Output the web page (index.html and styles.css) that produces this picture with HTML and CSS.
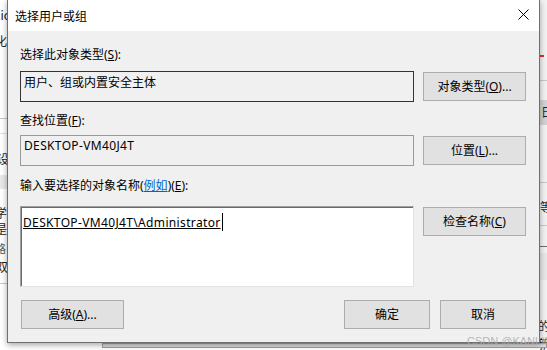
FILE: index.html
```html
<!DOCTYPE html>
<html lang="zh-CN">
<head>
	<meta charset="UTF-8">
	<meta name="viewport" content="width=device-width, initial-scale=1.0">
	<title>选择用户或组</title>
	<link rel="stylesheet" href="styles.css">
</head>
<body>
	<div class="desk">
		<!-- window behind the dialog, only its edges show -->
		<div class="bg bg--left">
			<span class="frag" style="top:7px;left:-3px">lic</span>
			<span class="frag" style="top:33px;left:-5px">化</span>
			<span class="line" style="top:118px"></span>
			<span class="line line--light" style="top:133px"></span>
			<span class="frag" style="top:151px;left:-3px">设</span>
			<span class="band" style="top:175px;height:14px"></span>
			<span class="frag" style="top:205px;left:-5px">学</span>
			<span class="frag" style="top:221px;left:-5px">是</span>
			<span class="frag frag--small" style="top:240px;left:-5px">路</span>
			<span class="frag" style="top:259px;left:-4px">双</span>
			<span class="line" style="top:283px"></span>
		</div>
		<div class="bg bg--right">
			<span class="mark" style="top:55px"></span>
			<span class="line" style="top:80px"></span>
			<span class="band band--dark" style="top:100px;height:25px"></span>
			<span class="frag" style="top:104px;left:1px">日</span>
			<span class="line" style="top:182px"></span>
			<span class="frag" style="top:199px;left:0">等</span>
			<span class="line" style="top:225px"></span>
			<span class="line line--dark" style="top:246px"></span>
			<span class="band" style="top:253px;height:27px"></span>
			<span class="frag" style="top:318px;left:-2px">的</span>
			<span class="frag" style="top:336px;left:-2px">新</span>
		</div>
		<div class="bg bg--bottom"></div>

		<div class="dialog">
			<div class="dialog__title">
				<span class="dialog__caption">选择用户或组</span>
				<span class="dialog__close">
					<svg width="11" height="11" viewBox="0 0 11 11"><path d="M0.5 0.5 L10.5 10.5 M10.5 0.5 L0.5 10.5" stroke="#000" stroke-width="1" fill="none"/></svg>
				</span>
			</div>
			<div class="dialog__body">
				<div class="label label--1">选择此对象类型(<u>S</u>):</div>
				<div class="row">
					<div class="box box--dark">用户、组或内置安全主体</div>
					<button class="btn">对象类型(<u>O</u>)...</button>
				</div>

				<div class="label label--2">查找位置(<u>F</u>):</div>
				<div class="row">
					<div class="box latin">DESKTOP-VM40J4T</div>
					<button class="btn">位置(<u>L</u>)...</button>
				</div>

				<div class="label label--3">输入要选择的对象名称(<a class="link">例如</a>)(<u>E</u>):</div>
				<div class="row row--top">
					<div class="box box--edit latin"><u>DESKTOP-VM40J4T\Administrator</u><span class="caret"></span></div>
					<button class="btn">检查名称(<u>C</u>)</button>
				</div>

				<div class="actions">
					<button class="btn btn--wide">高级(<u>A</u>)...</button>
					<div class="actions__right">
						<button class="btn btn--small">确定</button>
						<button class="btn btn--small">取消</button>
					</div>
				</div>
			</div>
		</div>

		<div class="watermark">CSDN @KANLINB</div>
	</div>
</body>
</html>
```

FILE: styles.css
```css
* { box-sizing: border-box }
body {
	margin: 0;
	background: #fff;
	font-family: "Noto Sans", "Noto Sans CJK SC", sans-serif;
	font-size: 12px;
	color: #000;
}
.desk {
	position: relative;
	width: 547px;
	height: 350px;
	overflow: hidden;
}

/* background window */
.bg {
	position: absolute;
	overflow: hidden;
}
.bg--left {
	left: 0;
	top: 0;
	width: 8px;
	height: 350px;
	background: #fff;
}
.bg--right {
	left: 540px;
	top: 0;
	width: 7px;
	height: 350px;
	background: #f2f2f2;
}
.bg--bottom {
	left: 102px;
	top: 343px;
	width: 445px;
	height: 5px;
	background: #dadada;
	border: 1px solid #a0a0a0;
}
.frag {
	position: absolute;
	font-family: "Noto Sans CJK SC", sans-serif;
	font-size: 12px;
	line-height: 16px;
	color: #222;
}
.frag--small { font-size: 11px; color: #555 }
.line {
	position: absolute;
	left: 0;
	width: 100%;
	height: 1px;
	background: #c8c8c8;
}
.line--light { background: #e2e2e2 }
.line--dark { background: #6e6e6e }
.band {
	position: absolute;
	left: 0;
	width: 100%;
	background: #e8e8e8;
}
.band--dark { background: #d2d2d2 }
.mark {
	position: absolute;
	left: 0;
	width: 4px;
	height: 2px;
	background: #d33;
}

/* dialog */
.dialog {
	position: absolute;
	left: 7px;
	top: 0;
	width: 533px;
	height: 343px;
	border: 1px solid #6f6f6f;
	border-top: 0;
	background: #f0f0f0;
	box-shadow: 0 2px 6px rgba(0, 0, 0, .35);
	display: flex;
	flex-direction: column;
}
.dialog__title {
	height: 31px;
	background: #fff;
	display: flex;
	align-items: center;
	justify-content: space-between;
	padding: 0 9px 0 7px;
}
.dialog__caption {
	font-family: "Noto Sans CJK SC", sans-serif;
	font-size: 12px;
	line-height: 16px;
	padding-top: 1px;
}
.dialog__close {
	display: flex;
	width: 11px;
	height: 11px;
	margin-right: 1px;
	margin-top: -2px;
}
.dialog__body {
	flex: 1;
	padding: 16px 13px 0 12px;
	display: flex;
	flex-direction: column;
}
.label {
	line-height: 16px;
	height: 16px;
}
.label--1 { margin-bottom: 8px }
.label--2 { margin-top: 11px; margin-bottom: 6px }
.label--3 { margin-top: 12px; margin-bottom: 12px }
.link {
	color: #0066cc;
	text-decoration: underline;
}
.row {
	display: flex;
	align-items: center;
	gap: 9px;
}
.row--top { align-items: flex-start }
.row--top .btn { margin-top: 1px }
.box {
	width: 394px;
	height: 31px;
	border: 1px solid #9a9a9a;
	padding: 2px 3px;
	line-height: 16px;
	white-space: nowrap;
}
.latin { letter-spacing: .35px }
.box--dark {
	border-color: #333;
	padding-top: 3px;
}
.box--edit {
	height: 81px;
	background: #fff;
	border-color: #a0a0a0 #e3e3e3 #e3e3e3 #a0a0a0;
	box-shadow: inset 1px 1px 0 #6a6a6a;
	padding: 6px 2px;
	line-height: 17px;
}
.caret {
	display: inline-block;
	width: 1px;
	height: 18px;
	background: #000;
	vertical-align: -4px;
	margin-left: 1px;
}
.btn {
	width: 103px;
	height: 29px;
	padding: 0;
	margin: 0;
	border: 1px solid #adadad;
	background: #e1e1e1;
	color: #000;
	font-family: inherit;
	font-size: 12px;
	line-height: 16px;
	flex: none;
}
.actions {
	margin-top: 13px;
	display: flex;
	justify-content: space-between;
	padding-left: 1px;
}
.actions__right {
	display: flex;
	gap: 10px;
}
.btn--small { width: 86px }

.watermark {
	position: absolute;
	left: 467px;
	top: 335px;
	font-family: "Liberation Sans", sans-serif;
	font-size: 11px;
	line-height: 12px;
	color: rgba(170, 170, 170, .85);
	white-space: nowrap;
}
```
